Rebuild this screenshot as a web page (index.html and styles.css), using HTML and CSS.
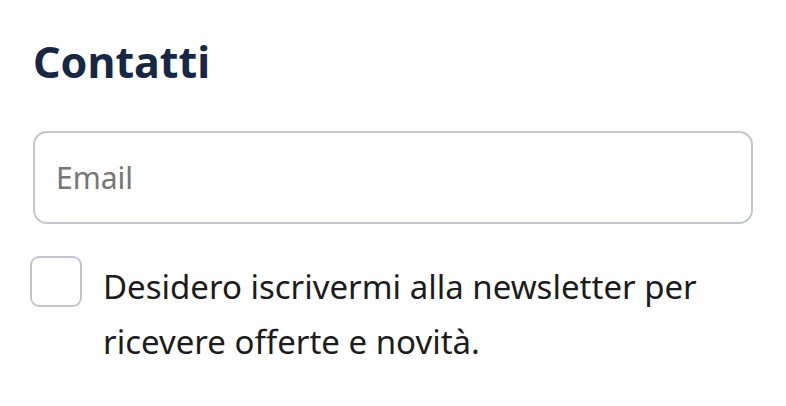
FILE: index.html
```html
<!DOCTYPE html>
<html lang="it">
<head>
<meta charset="utf-8">
<link rel="stylesheet" href="styles.css">
</head>
<body>
<section class="contacts">
  <h2 class="title">Contatti</h2>
  <input class="field" type="email" placeholder="Email">
  <label class="consent">
    <span class="box"></span>
    <span class="consent-text">Desidero iscrivermi alla newsletter per ricevere offerte e novità.</span>
  </label>
</section>
</body>
</html>
```

FILE: styles.css
```css
html, body {
  margin: 0;
  padding: 0;
  background: #ffffff;
}
body {
  font-family: "Noto Sans", "Open Sans", sans-serif;
}
.contacts {
  padding: 36px 33px 0 33px;
  width: 720px;
}
.title {
  margin: 0;
  font-size: 43px;
  font-weight: 700;
  line-height: 52px;
  color: #172744;
}
.field {
  display: block;
  box-sizing: border-box;
  width: 720px;
  height: 93px;
  margin-top: 43px;
  padding: 0 21px;
  border: 2px solid #c3c6cf;
  border-radius: 14px;
  font-family: inherit;
  font-size: 30px;
  color: #222;
  outline: none;
}
.field::placeholder {
  color: #767676;
}
.consent {
  display: flex;
  align-items: flex-start;
  gap: 21px;
  margin-top: 32px;
  margin-left: -3px;
}
.box {
  flex: none;
  box-sizing: border-box;
  width: 52px;
  height: 51px;
  border: 2px solid #c3c6cf;
  border-radius: 9px;
}
.consent-text {
  font-size: 33px;
  line-height: 55px;
  color: #1c1c1c;
  margin-top: 3px;
  width: 650px;
}
```
